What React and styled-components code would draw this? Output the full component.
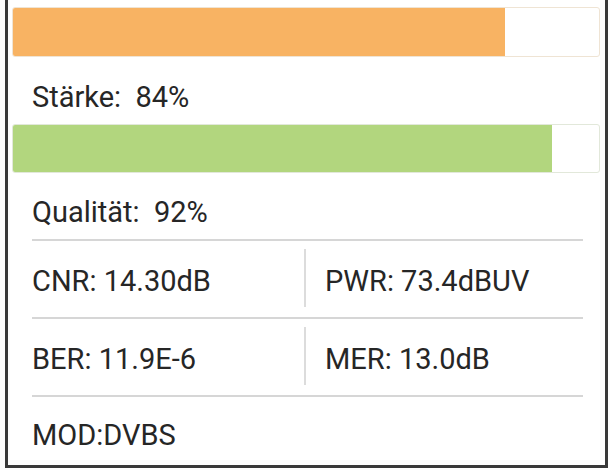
import React from "react";
import styled, { createGlobalStyle } from "styled-components";

const Global = createGlobalStyle`
  html, body {
    margin: 0;
    padding: 0;
    background: #ffffff;
  }
  body {
    font-family: Roboto, "Noto Sans", Arial, sans-serif;
  }
`;

const Frame = styled.div`
  box-sizing: border-box;
  width: 603px;
  margin-left: 5px;
  border: 3px solid #3a3a3a;
  border-top: none;
  background: #ffffff;
  display: flex;
  flex-direction: column;
`;

const Track = styled.div`
  box-sizing: border-box;
  height: ${(p) => p.$h}px;
  margin: ${(p) => p.$top}px 5px 0 4px;
  border: 1px solid ${(p) => p.$edge};
  border-radius: 3px;
  background: #ffffff;
  overflow: hidden;
  display: flex;
`;

const Fill = styled.div`
  height: 100%;
  background: ${(p) => p.$color};
`;

const Label = styled.div`
  margin-top: ${(p) => p.$top}px;
  padding-left: 24px;
  height: 36px;
  line-height: 36px;
  font-size: 29px;
  color: #262626;
  white-space: pre;
`;

const Table = styled.div`
  margin: 9px 22px 0 24px;
  display: flex;
  flex-direction: column;
`;

const Row = styled.div`
  box-sizing: border-box;
  display: grid;
  grid-template-columns: 272px 1fr;
  height: ${(p) => p.$h}px;
  border-top: 2px solid #d6d6d6;
`;

const Cell = styled.div`
  display: flex;
  align-items: center;
  margin: 8px 0 10px;
  padding-top: 6px;
  font-size: 29px;
  color: #262626;
  white-space: pre;
  ${(p) =>
    p.$split &&
    `
    border-left: 2px solid #dcdcdc;
    padding-left: 19px;
  `}
`;

const FootCell = styled.div`
  grid-column: 1 / -1;
  display: flex;
  align-items: center;
  padding-top: 8px;
  font-size: 29px;
  color: #262626;
`;

const Meter = ({ value, color, edge, top, h }) => (
  <Track $edge={edge} $top={top} $h={h}>
    <Fill $color={color} style={{ width: `${value}%` }} />
  </Track>
);

export default function App() {
  return (
    <>
      <Global />
      <Frame>
        <Meter value={84} color="#f8b363" edge="#efe4d4" top={7} h={50} />
        <Label $top={22}>{"Stärke:  84%"}</Label>
        <Meter value={92} color="#b2d67e" edge="#e2e8da" top={9} h={49} />
        <Label $top={21}>{"Qualität:  92%"}</Label>
        <Table>
          <Row $h={78}>
            <Cell>CNR: 14.30dB</Cell>
            <Cell $split>PWR: 73.4dBUV</Cell>
          </Row>
          <Row $h={78}>
            <Cell>BER: 11.9E-6</Cell>
            <Cell $split>MER: 13.0dB</Cell>
          </Row>
          <Row $h={70}>
            <FootCell>MOD:DVBS</FootCell>
          </Row>
        </Table>
      </Frame>
    </>
  );
}
